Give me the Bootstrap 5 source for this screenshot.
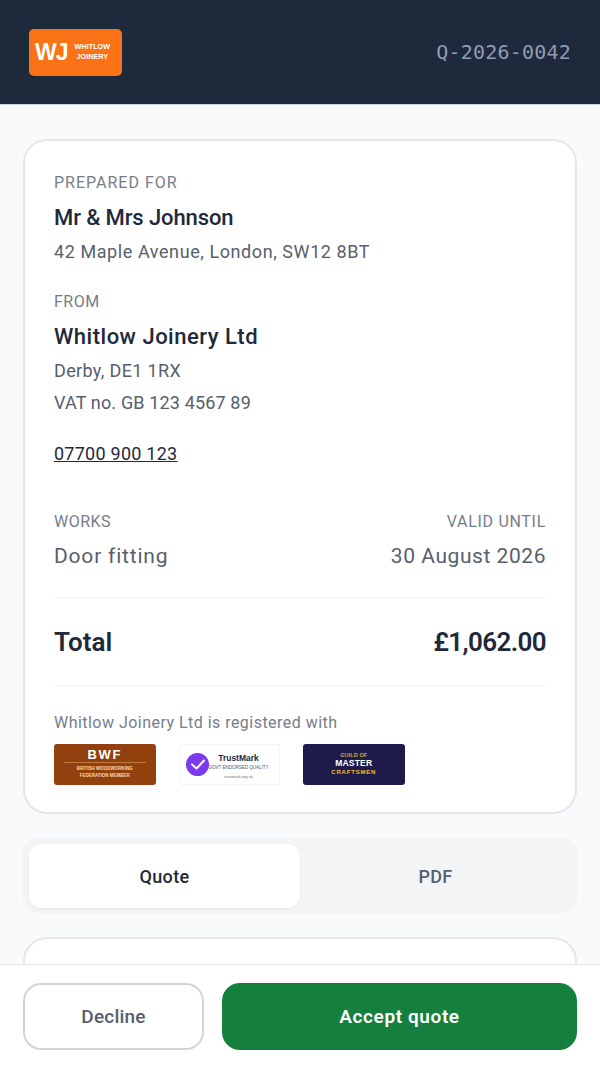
<!DOCTYPE html>
<html lang="en">
<head>
  <meta charset="UTF-8" />
  <meta name="viewport" content="width=device-width, initial-scale=1.0" />
  <title>Quote Q-2026-0042</title>
  <link href="https://cdn.jsdelivr.net/npm/bootstrap@5.3.0/dist/css/bootstrap.min.css" rel="stylesheet" />
  <style>
    body {
      font-family: Roboto, "Liberation Sans", sans-serif;
      background-color: #f9fafb;
      color: #1e293b;
    }

    .page-clip {
      height: 1067px;
      overflow: hidden;
    }

    .top-bar {
      height: 105px;
      background-color: #1e293b;
      border-bottom: 1px solid #cbd5e1;
      padding: 0 29px;
    }

    .logo-box {
      width: 93px;
      height: 47px;
      background-color: #f97316;
      border-radius: 5px;
      color: #fff;
      font-family: "Liberation Sans", sans-serif;
      font-weight: 700;
      padding-left: 6px;
    }

    .logo-mark {
      font-size: 23px;
      letter-spacing: -1px;
    }

    .logo-name {
      font-size: 7.3px;
      line-height: 10px;
      text-align: center;
      margin-left: 7px;
    }

    .quote-ref {
      font-family: "DejaVu Sans Mono", monospace;
      font-size: 20px;
      letter-spacing: 0.2px;
      color: #8f9db2;
    }

    .content-wrap {
      padding: 34px 23px 0;
    }

    .quote-box {
      background-color: #fff;
      border: 2px solid #e5e7eb;
      border-radius: 24px;
      padding: 30px 29px 27px;
    }

    .field-label {
      font-size: 16px;
      line-height: 24px;
      letter-spacing: 0.5px;
      color: #767d89;
    }

    .field-label.wide {
      letter-spacing: 1px;
    }

    .field-label.mid {
      letter-spacing: 0.7px;
    }

    .from-gap {
      margin-top: 22px;
    }

    .party-name {
      font-size: 22px;
      line-height: 32px;
      font-weight: 500;
      letter-spacing: 0.5px;
      margin-top: 7px;
    }

    .party-name.tight {
      letter-spacing: -0.1px;
    }

    .party-line {
      font-size: 18px;
      line-height: 32px;
      color: #565f6d;
      letter-spacing: 0.35px;
    }

    .party-line.first {
      margin-top: 2px;
    }

    .party-line.address {
      letter-spacing: 0.58px;
    }

    .party-line.vat {
      letter-spacing: 0.15px;
    }

    .phone-link {
      font-size: 18px;
      line-height: 32px;
      letter-spacing: 0.25px;
      color: #1e293b;
      display: inline-block;
      margin-top: 19px;
    }

    .works-value {
      font-size: 21px;
      line-height: 32px;
      color: #565f6d;
      letter-spacing: 0.8px;
      margin-top: 6px;
    }

    .works-value.date {
      letter-spacing: 0.55px;
    }

    .rule-line {
      border-top: 1px solid #f3f4f6;
    }

    .rule-gap {
      margin-top: 25px;
    }

    .total-row {
      font-size: 26px;
      font-weight: 600;
      line-height: 36px;
      padding: 26px 0 25px;
    }

    .total-amount {
      letter-spacing: -0.6px;
    }

    .reg-text {
      font-size: 16px;
      line-height: 24px;
      letter-spacing: 0.47px;
      color: #767d89;
      margin-top: 25px;
    }

    .badge-row {
      gap: 23px;
      margin-top: 9px;
    }

    .reg-badge {
      width: 101.5px;
      height: 41px;
      border-radius: 3px;
      font-family: "Liberation Sans", sans-serif;
      font-weight: 700;
      text-align: center;
    }

    .badge-bwf {
      background-color: #92400e;
      color: #fff;
    }

    .badge-bwf .big {
      font-size: 13px;
      letter-spacing: 1.6px;
      line-height: 13px;
      padding-top: 3.5px;
    }

    .badge-bwf .sub {
      font-size: 4.5px;
      line-height: 7px;
      color: #fed7aa;
    }

    .badge-bwf hr {
      margin: 1.5px 10px 2px;
      border-top: 1px solid #c2793f;
      opacity: 1;
    }

    .badge-tm {
      background-color: #fff;
      border: 1px solid #f3f4f6;
      color: #1e293b;
      padding-left: 6px;
      padding-right: 11px;
    }

    .tm-text {
      margin-top: 3px;
    }

    .tm-name {
      font-size: 8.5px;
      line-height: 12px;
    }

    .tm-sub {
      font-size: 4.5px;
      font-weight: 400;
      line-height: 8px;
      color: #4b5563;
      white-space: nowrap;
    }

    .tm-url {
      font-size: 4px;
      font-weight: 400;
      line-height: 9px;
      color: #6b7280;
    }

    .badge-gm {
      background-color: #1e1b4b;
      padding-top: 7px;
    }

    .badge-gm .gold {
      font-size: 5.5px;
      line-height: 8px;
      letter-spacing: 0.1px;
      color: #d9a441;
    }

    .badge-gm .white {
      font-size: 8.5px;
      line-height: 9px;
      letter-spacing: 0.2px;
      color: #fff;
    }

    .badge-gm .gold2 {
      font-size: 6px;
      line-height: 9px;
      letter-spacing: 0.8px;
      color: #fbbf24;
    }

    .tab-strip {
      background-color: #f3f4f6;
      border-radius: 14px;
      padding: 6px 6px 5px;
      margin-top: 24px;
    }

    .tab-btn {
      flex: 1;
      height: 64px;
      font-size: 18px;
      font-weight: 500;
      letter-spacing: 0.3px;
      color: #565f6d;
      border: 0;
      background: transparent;
      border-radius: 12px;
    }

    .tab-btn.on {
      background-color: #fff;
      color: #1e293b;
      box-shadow: 0 1px 3px rgba(0, 0, 0, 0.06);
    }

    .next-box {
      height: 300px;
      margin-top: 24px;
      background-color: #fff;
      border: 2px solid #e5e7eb;
      border-radius: 24px;
    }

    .action-bar {
      height: 103px;
      background-color: #fff;
      border-top: 1px solid #e5e7eb;
      padding: 18px 23px;
      gap: 18px;
    }

    .btn-decline,
    .btn-accept {
      height: 67px;
      font-size: 19px;
      font-weight: 500;
      letter-spacing: 0.2px;
      border-radius: 18px;
      padding-top: 8px;
    }

    .btn-decline {
      width: 181px;
      background-color: #fff;
      border: 2px solid #d1d5db;
      color: #565f6d;
    }

    .btn-accept {
      flex: 1;
      background-color: #15803d;
      border: 0;
      color: #fff;
      font-weight: 600;
      letter-spacing: 0.6px;
    }
  </style>
</head>
<body>
  <div class="page-clip">
    <!-- Header -->
    <header class="top-bar d-flex align-items-center justify-content-between">
      <div class="logo-box d-flex align-items-center">
        <span class="logo-mark">WJ</span>
        <span class="logo-name">WHITLOW<br>JOINERY</span>
      </div>
      <span class="quote-ref">Q-2026-0042</span>
    </header>

    <div class="content-wrap">
      <!-- Quote summary -->
      <section class="quote-box">
        <div class="field-label wide">PREPARED FOR</div>
        <div class="party-name tight">Mr &amp; Mrs Johnson</div>
        <div class="party-line first address">42 Maple Avenue, London, SW12 8BT</div>

        <div class="field-label from-gap">FROM</div>
        <div class="party-name">Whitlow Joinery Ltd</div>
        <div class="party-line first">Derby, DE1 1RX</div>
        <div class="party-line vat">VAT no. GB 123 4567 89</div>
        <a class="phone-link" href="#">07700 900 123</a>

        <div class="d-flex justify-content-between mt-4 pt-3">
          <div>
            <div class="field-label">WORKS</div>
            <div class="works-value">Door fitting</div>
          </div>
          <div class="text-end">
            <div class="field-label mid">VALID UNTIL</div>
            <div class="works-value date">30 August 2026</div>
          </div>
        </div>

        <div class="rule-line rule-gap"></div>
        <div class="total-row d-flex justify-content-between">
          <span>Total</span>
          <span class="total-amount">£1,062.00</span>
        </div>
        <div class="rule-line"></div>

        <div class="reg-text">Whitlow Joinery Ltd is registered with</div>
        <div class="badge-row d-flex">
          <div class="reg-badge badge-bwf">
            <div class="big">BWF</div>
            <hr>
            <div class="sub">BRITISH WOODWORKING</div>
            <div class="sub">FEDERATION MEMBER</div>
          </div>
          <div class="reg-badge badge-tm d-flex align-items-center">
            <svg width="23" height="23" viewBox="0 0 23 23" class="flex-shrink-0">
              <circle cx="11.5" cy="11.5" r="11.5" fill="#7c3aed" />
              <path d="M6 11.5l4.5 4 7.5-8" fill="none" stroke="#fff" stroke-width="2" stroke-linecap="round" stroke-linejoin="round" />
            </svg>
            <div class="tm-text flex-grow-1">
              <div class="tm-name">TrustMark</div>
              <div class="tm-sub">GOVT ENDORSED QUALITY</div>
              <div class="tm-url">trustmark.org.uk</div>
            </div>
          </div>
          <div class="reg-badge badge-gm">
            <div class="gold">GUILD OF</div>
            <div class="white">MASTER</div>
            <div class="gold2">CRAFTSMEN</div>
          </div>
        </div>
      </section>

      <!-- Quote / PDF switch -->
      <div class="tab-strip d-flex">
        <button class="tab-btn on" type="button">Quote</button>
        <button class="tab-btn" type="button">PDF</button>
      </div>

      <div class="next-box"></div>
    </div>

    <!-- Actions -->
    <div class="action-bar fixed-bottom d-flex">
      <button class="btn btn-decline" type="button">Decline</button>
      <button class="btn btn-accept" type="button">Accept quote</button>
    </div>
  </div>

  <script src="https://cdn.jsdelivr.net/npm/bootstrap@5.3.0/dist/js/bootstrap.bundle.min.js"></script>
</body>
</html>
